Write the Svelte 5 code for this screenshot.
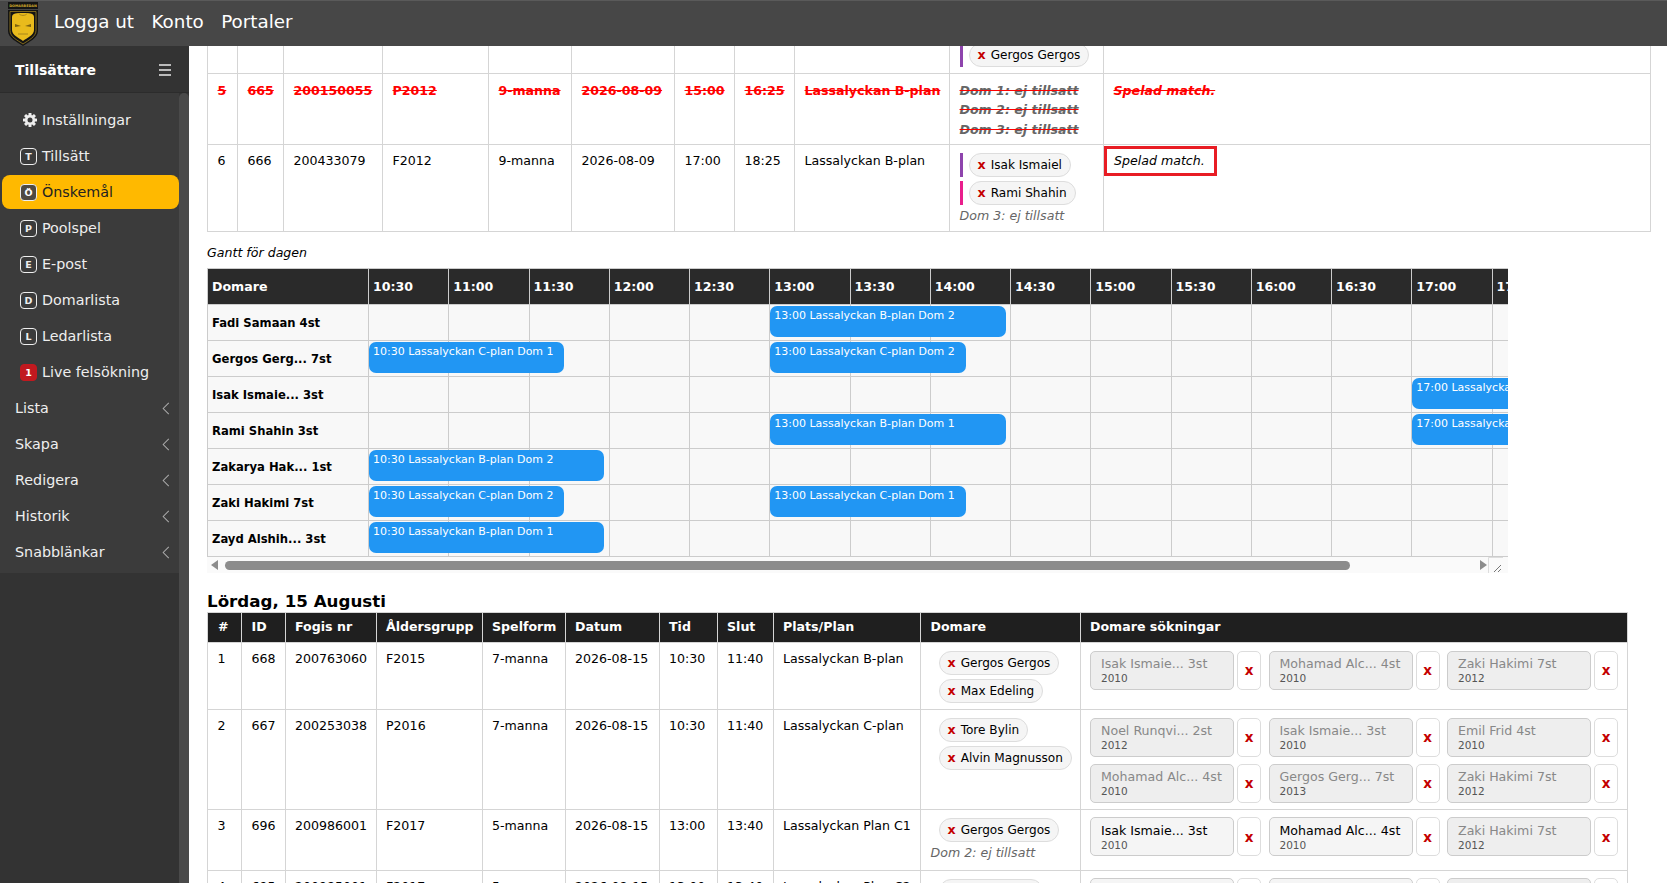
<script>
  const menu = [
    { key: 'T', label: 'Tillsätt' },
    { key: 'Ö', label: 'Önskemål', active: true },
    { key: 'P', label: 'Poolspel' },
    { key: 'E', label: 'E-post' },
    { key: 'D', label: 'Domarlista' },
    { key: 'L', label: 'Ledarlista' },
    { key: '1', label: 'Live felsökning', alert: true }
  ];
  const groups = ['Lista', 'Skapa', 'Redigera', 'Historik', 'Snabblänkar'];

  const firstCols = [30, 46, 99, 106, 83, 103, 60, 60, 155, 154, 547];
  const secondCols = [34, 43.5, 91, 106, 83, 94, 58, 56, 147.5, 159.5, 547];
  const heads = ['#', 'ID', 'Fogis nr', 'Åldersgrupp', 'Spelform', 'Datum', 'Tid', 'Slut', 'Plats/Plan', 'Domare', 'Domare sökningar'];

  const times = ['10:30', '11:00', '11:30', '12:00', '12:30', '13:00', '13:30', '14:00', '14:30', '15:00', '15:30', '16:00', '16:30', '17:00', '17:30', '18:00'];
  const slot = 80.25;
  const gantt = [
    { name: 'Fadi Samaan 4st', events: [{ at: 150, len: 85, text: '13:00 Lassalyckan B-plan Dom 2' }] },
    { name: 'Gergos Gerg... 7st', events: [
      { at: 0, len: 70, text: '10:30 Lassalyckan C-plan Dom 1' },
      { at: 150, len: 70, text: '13:00 Lassalyckan C-plan Dom 2' }
    ] },
    { name: 'Isak Ismaie... 3st', events: [{ at: 390, len: 85, text: '17:00 Lassalyckan B-plan Dom 1' }] },
    { name: 'Rami Shahin 3st', events: [
      { at: 150, len: 85, text: '13:00 Lassalyckan B-plan Dom 1' },
      { at: 390, len: 85, text: '17:00 Lassalyckan B-plan Dom 2' }
    ] },
    { name: 'Zakarya Hak... 1st', events: [{ at: 0, len: 85, text: '10:30 Lassalyckan B-plan Dom 2' }] },
    { name: 'Zaki Hakimi 7st', events: [
      { at: 0, len: 70, text: '10:30 Lassalyckan C-plan Dom 2' },
      { at: 150, len: 70, text: '13:00 Lassalyckan C-plan Dom 1' }
    ] },
    { name: 'Zayd Alshih... 3st', events: [{ at: 0, len: 85, text: '10:30 Lassalyckan B-plan Dom 1' }] }
  ];

  const saturday = [
    { cells: ['1', '668', '200763060', 'F2015', '7-manna', '2026-08-15', '10:30', '11:40', 'Lassalyckan B-plan'],
      refs: ['Gergos Gergos', 'Max Edeling'],
      asks: [['Isak Ismaie... 3st', '2010'], ['Mohamad Alc... 4st', '2010'], ['Zaki Hakimi 7st', '2012']] },
    { cells: ['2', '667', '200253038', 'P2016', '7-manna', '2026-08-15', '10:30', '11:40', 'Lassalyckan C-plan'],
      refs: ['Tore Bylin', 'Alvin Magnusson'],
      asks: [['Noel Runqvi... 2st', '2012'], ['Isak Ismaie... 3st', '2010'], ['Emil Frid 4st', '2010'], ['Mohamad Alc... 4st', '2010'], ['Gergos Gerg... 7st', '2013'], ['Zaki Hakimi 7st', '2012']] },
    { cells: ['3', '696', '200986001', 'F2017', '5-manna', '2026-08-15', '13:00', '13:40', 'Lassalyckan Plan C1'],
      refs: ['Gergos Gergos'], missing: 'Dom 2: ej tillsatt',
      asks: [['Isak Ismaie... 3st', '2010', true], ['Mohamad Alc... 4st', '2010', true], ['Zaki Hakimi 7st', '2012']] },
    { cells: ['4', '695', '200985001', 'F2017', '5-manna', '2026-08-15', '13:00', '13:40', 'Lassalyckan Plan C2'],
      refs: ['Max Edeling'],
      asks: [['Isak Ismaie... 3st', '2010', true], ['Mohamad Alc... 4st', '2010', true], ['Zaki Hakimi 7st', '2012']] }
  ];
</script>

{#snippet pill(name, bar)}
  <div class="ref">
    {#if bar}<span class="bar" style="background: {bar}"></span>{/if}
    <span class="pill"><b>x</b>{name}</span>
  </div>
{/snippet}

<div class="page">
  <header class="topbar">
    <svg class="logo" viewBox="0 0 30 44" width="30" height="44">
      <rect x="0" y="0" width="30" height="7" fill="#141414" />
      <text x="15" y="5" text-anchor="middle" font-size="3.4" font-weight="700" fill="#d2a92c" font-family="DejaVu Sans">DOMARBEDAN</text>
      <path d="M0 8 H30 V29 C30 36 21 40 15 44 C9 40 0 36 0 29 Z" fill="#141414" />
      <path d="M2 9.5 H28 V28.5 C28 35 20 38.500 15 42 C10 38.500 2 35 2 28.500 Z" fill="none" stroke="#9a7d1e" stroke-width="0.8" />
      <path d="M4 15 C4 11 9 11 15 11 C21 11 26 11 26 15 V28 C26 33 19 36 15 39 C11 36 4 33 4 28 Z" fill="#e9bb1c" />
      <path d="M7 22 L13 24 L7 25 Z M23 22 L17 24 L23 25 Z" fill="#7c6210" />
      <path d="M11 11.500 C12 14 18 14 19 11.500" fill="none" stroke="#a8861a" stroke-width="1" />
      <path d="M10 32 H20" stroke="#a8861a" stroke-width="1" />
    </svg>
    <nav class="topnav">
      <span>Logga ut</span>
      <span>Konto</span>
      <span>Portaler</span>
    </nav>
  </header>

  <div class="body">
    <aside class="sidebar">
      <div class="side-head">
        <span>Tillsättare</span>
        <i class="burger"></i>
      </div>
      <div class="side-body">
        <nav class="menu">
          <div class="item settings">
            <svg class="gear" viewBox="0 0 14 14" width="14" height="14">
              {#each [0, 45, 90, 135, 180, 225, 270, 315] as deg}
                <rect x="5.5" y="0" width="3" height="3.500" rx="0.5" fill="#eee" transform="rotate({deg} 7 7)" />
              {/each}
              <circle cx="7" cy="7" r="3.800" fill="none" stroke="#eee" stroke-width="2.600" />
            </svg>
            <span>Inställningar</span>
          </div>
          {#each menu as m}
            <div class="item" class:active={m.active}>
              <span class="key" class:alert={m.alert}>{m.key}</span>
              <span>{m.label}</span>
            </div>
          {/each}
          {#each groups as g}
            <div class="item group">
              <span>{g}</span>
              <svg viewBox="0 0 8 14" width="8" height="13"><path d="M7 1 L1 7 L7 13" fill="none" stroke="#aaa" stroke-width="1.100" /></svg>
            </div>
          {/each}
        </nav>
        <div class="track"></div>
      </div>
    </aside>

    <main class="content">
      <table class="matches first">
        <colgroup>{#each firstCols as w}<col style="width: {w}px" />{/each}</colgroup>
        <tbody>
          <tr>
            <td>4</td><td>664</td><td>200150054</td><td>P2012</td><td>9-manna</td><td>2026-08-09</td><td>13:00</td><td>14:25</td><td>Lassalyckan B-plan</td>
            <td>
              {@render pill('Zaki Hakimi', '#8e44ad')}
              {@render pill('Gergos Gergos', '#8e44ad')}
            </td>
            <td></td>
          </tr>
          <tr class="cancelled">
            <td>5</td><td>665</td><td>200150055</td><td>P2012</td><td>9-manna</td><td>2026-08-09</td><td>15:00</td><td>16:25</td><td>Lassalyckan B-plan</td>
            <td class="struck">
              <div><em>Dom 1: ej tillsatt</em></div>
              <div><em>Dom 2: ej tillsatt</em></div>
              <div><em>Dom 3: ej tillsatt</em></div>
            </td>
            <td class="note">Spelad match.</td>
          </tr>
          <tr>
            <td>6</td><td>666</td><td>200433079</td><td>F2012</td><td>9-manna</td><td>2026-08-09</td><td>17:00</td><td>18:25</td><td>Lassalyckan B-plan</td>
            <td>
              {@render pill('Isak Ismaiel', '#8e44ad')}
              {@render pill('Rami Shahin', '#e91e8c')}
              <em class="missing">Dom 3: ej tillsatt</em>
            </td>
            <td class="flagged"><span class="flag">Spelad match.</span></td>
          </tr>
        </tbody>
      </table>

      <p class="caption">Gantt för dagen</p>
      <div class="gantt">
        <div class="gantt-row gantt-head">
          <div class="cell">Domare</div>
          {#each times as t}<div class="cell">{t}</div>{/each}
        </div>
        {#each gantt as row}
          <div class="gantt-row">
            <div class="cell name">{row.name}</div>
            {#each times as t}<div class="cell"></div>{/each}
            {#each row.events as ev}
              <div class="event" style="left: {161 + (ev.at / 30) * slot}px; width: {(ev.len / 30) * slot + 8}px">{ev.text}</div>
            {/each}
          </div>
        {/each}
      </div>
      <div class="hscroll">
        <i class="arrow left"></i>
        <div class="thumb"></div>
        <i class="arrow right"></i>
        <svg class="corner" viewBox="0 0 15 16" width="15" height="16">
          <path d="M0.500 16 V0.500 H15" fill="none" stroke="#ddd" />
          <path d="M6 15 L13 8 M10 15 L13 12" stroke="#777" stroke-width="1" />
        </svg>
      </div>

      <h3>Lördag, 15 Augusti</h3>
      <table class="matches second">
        <colgroup>{#each secondCols as w}<col style="width: {w}px" />{/each}</colgroup>
        <thead>
          <tr>{#each heads as h}<th>{h}</th>{/each}</tr>
        </thead>
        <tbody>
          {#each saturday as row}
            <tr>
              {#each row.cells as c}<td>{c}</td>{/each}
              <td class="refs">
                {#each row.refs as r}{@render pill(r)}{/each}
                {#if row.missing}<em class="missing">{row.missing}</em>{/if}
              </td>
              <td class="asks">
                <div class="ask-grid">
                  {#each row.asks as a}
                    <div class="ask">
                      <div class="card" class:open={a[2]}>
                        <span>{a[0]}</span>
                        <small>{a[1]}</small>
                      </div>
                      <button type="button">x</button>
                    </div>
                  {/each}
                </div>
              </td>
            </tr>
          {/each}
        </tbody>
      </table>
    </main>
  </div>
</div>

<style>
  :global(body) {
    margin: 0;
    overflow: hidden;
  }

  .page {
    width: 1667px;
    height: 883px;
    display: flex;
    flex-direction: column;
    overflow: hidden;
    font-family: "DejaVu Sans", Verdana, sans-serif;
    font-size: 12.6px;
    color: #000;
  }

  .topbar {
    flex: none;
    height: 46px;
    box-sizing: border-box;
    display: flex;
    align-items: center;
    padding-left: 8px;
    background: #474747;
    border-top: 1px solid #5a5a5a;
  }

  .logo {
    flex: none;
  }

  .topnav {
    display: flex;
    gap: 17.5px;
    margin: 0 0 4px 16px;
    color: #fff;
    font-size: 18.3px;
  }

  .body {
    flex: 1;
    display: flex;
    min-height: 0;
  }

  .sidebar {
    flex: none;
    width: 189px;
    display: flex;
    flex-direction: column;
    background: #333;
    color: #fff;
  }

  .side-head {
    flex: none;
    height: 47px;
    box-sizing: border-box;
    display: flex;
    align-items: center;
    justify-content: space-between;
    padding: 2px 18px 0 15px;
    font-size: 14px;
    font-weight: 700;
    background: #333;
    border-bottom: 1px solid #2c2c2c;
  }

  .burger {
    width: 12px;
    height: 2px;
    background: #bbb;
    box-shadow: 0 -5px 0 #bbb, 0 5px 0 #bbb;
  }

  .side-body {
    flex: 1;
    display: flex;
    align-items: flex-start;
    min-height: 0;
    background: #333;
    position: relative;
  }

  .menu {
    width: 179px;
    box-sizing: border-box;
    padding: 9px 0 3px;
    background: #3b3b3b;
  }

  .item {
    height: 36px;
    box-sizing: border-box;
    display: flex;
    align-items: center;
    gap: 5px;
    margin: 0 0 0 2px;
    padding-left: 18px;
    font-size: 14.3px;
    color: #eee;
  }

  .item.active {
    height: 34px;
    margin: 1px 0 1px 2px;
    background: #ffb900;
    border-radius: 8px;
    color: #222;
  }

  .settings {
    padding-left: 21px;
    gap: 5px;
  }

  .gear {
    flex: none;
  }

  .key {
    flex: none;
    width: 17px;
    height: 17px;
    box-sizing: border-box;
    display: flex;
    align-items: center;
    justify-content: center;
    border: 1px solid #eee;
    border-radius: 4px;
    font-size: 9.500px;
    font-weight: 700;
  }

  .active .key {
    background: #4f4a42;
    color: #fff;
  }

  .key.alert {
    background: #c1191f;
    border-color: #c1191f;
    color: #fff;
  }

  .group {
    justify-content: space-between;
    margin-left: 0;
    padding: 0 9px 0 15px;
  }

  .track {
    width: 10px;
    align-self: stretch;
    background: #4a4a4a;
    border-radius: 5px 5px 0 0;
  }

  .content {
    flex: 1;
    min-width: 0;
    overflow: hidden;
    padding-left: 18px;
    background: #fff;
  }

  .matches {
    table-layout: fixed;
    border-collapse: collapse;
  }

  .matches td,
  .matches th {
    box-sizing: border-box;
    padding: 6.5px 9.500px 6px;
    border: 1px solid #d5d5d5;
    line-height: 18px;
    vertical-align: top;
    text-align: left;
    white-space: nowrap;
  }

  .first {
    width: 1443px;
    margin-top: -40px;
  }

  .ref {
    display: flex;
    align-items: stretch;
    gap: 6px;
    height: 24px;
    margin-top: 1.5px;
  }

  .ref + .ref {
    margin-top: 4px;
  }

  .refs .ref {
    margin-left: 8px;
  }

  .second .refs .ref:first-child {
    margin-top: 0.5px;
  }

  .bar {
    flex: none;
    width: 3px;
  }

  .pill {
    display: inline-flex;
    align-items: center;
    height: 24px;
    box-sizing: border-box;
    padding: 0 8px;
    background: #f5f5f5;
    border: 1px solid #ddd;
    border-radius: 12px;
    font-size: 12.1px;
  }

  .pill b {
    margin-right: 5px;
    color: #c40000;
    font-size: 12.6px;
    font-weight: 700;
  }

  .cancelled td {
    padding-top: 7.5px;
    color: #f00;
    font-weight: 700;
    text-decoration: line-through;
  }

  .matches .struck {
    line-height: 19.600px;
    padding-top: 6.5px;
    padding-bottom: 5px;
  }

  .struck em {
    color: #666;
  }

  .matches .note {
    font-style: italic;
  }

  .missing {
    display: block;
    margin: 2px 0;
    color: #666;
  }

  .first .missing {
    margin-bottom: 0;
  }

  .matches .flagged {
    padding: 0;
  }

  .flag {
    display: inline-block;
    margin-top: 1px;
    padding: 3px 9px 3px 7px;
    border: 3px solid #e81c24;
    font-style: italic;
    line-height: 18px;
  }

  .caption {
    margin: 12px 0 6px;
    font-style: italic;
    line-height: 18px;
  }

  .gantt {
    width: 1301px;
    overflow: hidden;
    border-top: 1px solid #ccc;
    border-left: 1px solid #ccc;
    box-sizing: border-box;
  }

  .gantt-row {
    position: relative;
    display: grid;
    grid-template-columns: 161px repeat(16, 80.25px);
    height: 36px;
    box-sizing: border-box;
    border-bottom: 1px solid #ccc;
    background: #f8f8f8;
  }

  .cell {
    box-sizing: border-box;
    display: flex;
    align-items: center;
    padding: 0 4px;
    border-right: 1px solid #ccc;
    white-space: nowrap;
  }

  .gantt-head {
    background: #2a2a2a;
    color: #fff;
    font-weight: 700;
  }

  .name {
    font-size: 11.6px;
    font-weight: 700;
    padding-left: 4px;
  }

  .event {
    position: absolute;
    top: 1px;
    height: 31px;
    box-sizing: border-box;
    padding: 2px 4px 0;
    background: #2196f3;
    border-radius: 7px;
    color: #fff;
    font-size: 11px;
    line-height: 16px;
    white-space: nowrap;
    overflow: hidden;
  }

  .hscroll {
    width: 1301px;
    height: 16px;
    box-sizing: border-box;
    display: flex;
    align-items: center;
    background: #fafafa;
  }

  .thumb {
    width: 1125px;
    height: 9px;
    margin-left: 7px;
    background: #8c8c8c;
    border-radius: 5px;
  }

  .arrow {
    width: 0;
    height: 0;
    border-top: 5px solid transparent;
    border-bottom: 5px solid transparent;
  }

  .arrow.left {
    margin-left: 4px;
    border-right: 7px solid #8c8c8c;
  }

  .arrow.right {
    margin-left: 130px;
    border-left: 7px solid #8c8c8c;
  }

  .corner {
    flex: none;
    margin-left: 1px;
  }

  h3 {
    margin: 19px 0 1px;
    font-size: 16.7px;
    line-height: 19px;
    font-weight: 700;
  }

  .second {
    width: 1420px;
  }

  .matches th {
    height: 30px;
    padding: 5px 9.500px;
    background: #1f1f1f;
    color: #fff;
    font-weight: 700;
  }

  .matches th:first-child {
    padding-left: 10px;
  }

  .second td {
    padding-top: 7px;
  }

  .second .refs,
  .second .asks {
    padding-top: 7.5px;
  }

  .second .asks {
    padding-right: 0;
  }

  .ask-grid {
    display: flex;
    flex-wrap: wrap;
    gap: 7px 7.5px;
  }

  .ask {
    display: flex;
    gap: 3px;
  }

  .card {
    width: 144px;
    height: 39px;
    box-sizing: border-box;
    display: flex;
    flex-direction: column;
    justify-content: center;
    padding: 0 10px;
    background: #eee;
    border: 1px solid #ccc;
    border-radius: 5px;
    color: #888;
    line-height: 16px;
  }

  .card.open {
    background: #f5f5f5;
    color: #000;
  }

  .card small {
    font-size: 10.500px;
    line-height: 12px;
    color: #555;
  }

  .ask button {
    width: 24px;
    height: 39px;
    padding: 0;
    background: #fff;
    border: 1px solid #ddd;
    border-radius: 5px;
    color: #c40000;
    font-family: inherit;
    font-size: 13.500px;
    font-weight: 700;
  }
</style>
